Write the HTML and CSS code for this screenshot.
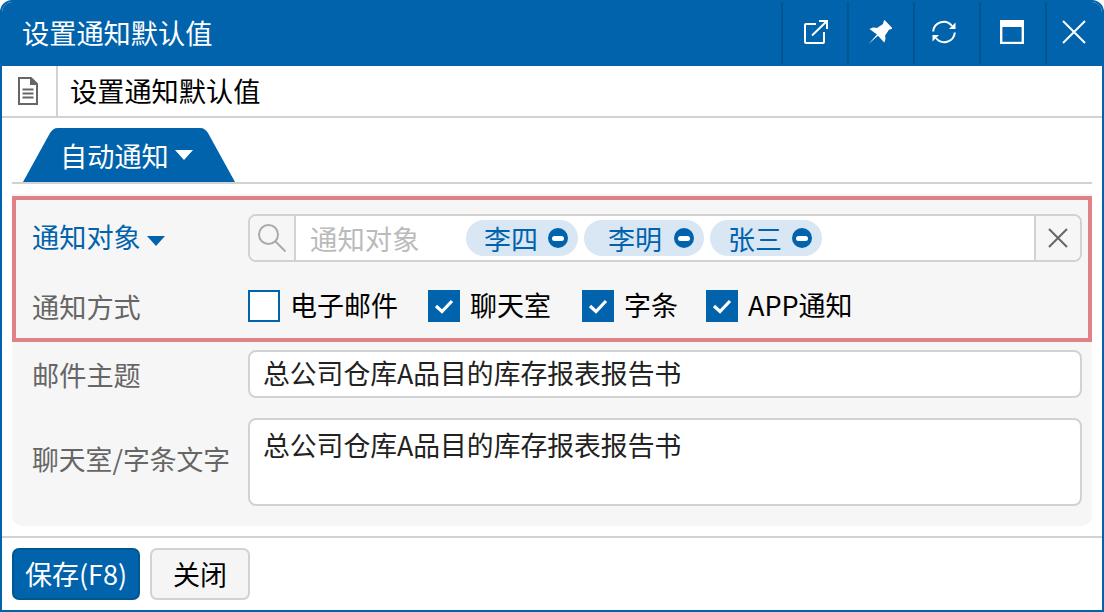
FILE: index.html
```html
<!DOCTYPE html>
<html lang="zh">
<head>
<meta charset="utf-8">
<title>设置通知默认值</title>
<link rel="stylesheet" href="styles.css">
</head>
<body>
<div class="window">
  <header class="titlebar">
    <div class="title">设置通知默认值</div>
    <div class="win-btn btn-ext"><svg width="24" height="24" viewBox="0 0 24 24" fill="none" stroke="#fff" stroke-width="2"><path d="M12 4H2a1 1 0 0 0-1 1v17a1 1 0 0 0 1 1h17a1 1 0 0 0 1-1V12"/><path d="M8 15.500 22.500 1.500"/><path d="M15 1h8v8"/></svg></div>
    <div class="win-btn btn-pin"><svg width="24" height="24" viewBox="0 0 24 24" fill="#fff"><path d="M.5 24 9 14.500 1.500 9c2.500-1.800 5-2 7.500-1l6-4 .8-3.200c.3-.6.800-.6 1.200-.2l7 7.200c.4.500.2 1-.5 1.200l-2.500.8-4 6c.8 2.500.6 4.800-.8 6.800l-6.200-6.800z"/></svg></div>
    <div class="win-btn btn-sync"><svg width="24" height="24" viewBox="0 0 24 24" fill="none" stroke="#fff" stroke-width="2"><path d="M1.200 11.500A10.500 10.500 0 0 1 20 6"/><path d="M22.800 12.500A10.500 10.500 0 0 1 4 18"/><path d="M23.500 2.500V9H17z" fill="#fff" stroke="none"/><path d="M.5 21.500V15H7z" fill="#fff" stroke="none"/></svg></div>
    <div class="win-btn btn-max"><svg width="24" height="24" viewBox="0 0 24 24" fill="none" stroke="#fff"><rect x="1.200" y="1" width="21.600" height="22" stroke-width="2.400"/><path d="M1 4h22" stroke-width="6"/></svg></div>
    <div class="win-btn btn-close"><svg width="24" height="24" viewBox="0 0 24 24" fill="none" stroke="#fff" stroke-width="2"><path d="M1 1l22 22M23 1 1 23"/></svg></div>
  </header>
  <div class="toolbar">
    <div class="doc-cell"><svg width="20" height="28" viewBox="0 0 20 28" fill="none" stroke="#666" stroke-width="2"><path d="M1 1h12l6 6v20H1z"/><path d="M13 1v6h6" fill="#666"/><path d="M4.500 12.500h11M4.500 16.500h11M4.500 20.500h11"/></svg></div>
    <div class="page-title">设置通知默认值</div>
  </div>
  <div class="main">
    <div class="tabs">
      <div class="tab">
        <svg class="tab-bg" width="212" height="54" viewBox="0 0 212 54"><path d="M0 54 27 5c2-3 4-5 8-5h142c4 0 6 2 8 5l27 49z" fill="#0063ac"/></svg>
        <span class="tab-text">自动通知</span><span class="caret caret-white"></span>
      </div>
    </div>
    <div class="panel">
      <div class="highlight">
        <div class="row row-target">
          <div class="label label-link">通知对象<span class="caret caret-blue"></span></div>
          <div class="picker">
            <div class="addon addon-search"><svg width="30" height="30" viewBox="0 0 30 30" fill="none" stroke="#aaa" stroke-width="2"><circle cx="11.500" cy="11.500" r="9.500"/><path d="M18.500 18.500 28.500 28.500"/></svg></div>
            <div class="picker-body">
              <span class="placeholder">通知对象</span>
              <div class="chips">
                <span class="chip chip-a">李四<i class="minus"></i></span>
                <span class="chip chip-b">李明<i class="minus"></i></span>
                <span class="chip chip-c">张三<i class="minus"></i></span>
              </div>
            </div>
            <div class="addon addon-clear"><svg width="20" height="20" viewBox="0 0 20 20" fill="none" stroke="#666" stroke-width="2"><path d="M1 1l18 18M19 1 1 19"/></svg></div>
          </div>
        </div>
        <div class="row row-method">
          <div class="label">通知方式</div>
          <div class="checks">
            <label class="check check-mail"><span class="box"></span><span class="check-text">电子邮件</span></label>
            <label class="check check-chat"><span class="box on"><svg width="20" height="16" viewBox="0 0 20 16" fill="none" stroke="#fff" stroke-width="3.200"><path d="M2 8l6 5.500L18 3"/></svg></span><span class="check-text">聊天室</span></label>
            <label class="check check-note"><span class="box on"><svg width="20" height="16" viewBox="0 0 20 16" fill="none" stroke="#fff" stroke-width="3.200"><path d="M2 8l6 5.500L18 3"/></svg></span><span class="check-text">字条</span></label>
            <label class="check"><span class="box on"><svg width="20" height="16" viewBox="0 0 20 16" fill="none" stroke="#fff" stroke-width="3.200"><path d="M2 8l6 5.500L18 3"/></svg></span><span class="check-text">APP通知</span></label>
          </div>
        </div>
      </div>
      <div class="row row-subject">
        <div class="label">邮件主题</div>
        <div class="field">总公司仓库A品目的库存报表报告书</div>
      </div>
      <div class="row row-text">
        <div class="label">聊天室/字条文字</div>
        <div class="field field-area">总公司仓库A品目的库存报表报告书</div>
      </div>
    </div>
  </div>
  <footer class="footer">
    <button class="btn btn-primary">保存(F8)</button>
    <button class="btn btn-default">关闭</button>
  </footer>
</div>
</body>
</html>
```
FILE: styles.css
```css
* { box-sizing: border-box; }
html, body { margin: 0; padding: 0; background: #fff; }
body { font-family: "Noto Sans CJK SC", "Noto Sans", sans-serif; font-size: 27px; color: #000; }
.window { width: 1104px; height: 612px; border: 2px solid #0063ac; border-radius: 12px 12px 0 0; display: flex; flex-direction: column; overflow: hidden; background: #fff; }
.titlebar { flex: none; background: #0063ac; display: flex; align-items: stretch; color: #fff; margin: -2px -2px 0; height: 66px; }
.title { flex: 1; padding-left: 22px; line-height: 64px; font-size: 27.2px; }
.win-btn { width: 66px; border-left: 2px solid #00568f; margin-bottom: 2px; display: flex; align-items: center; }
.btn-ext { padding-left: 21px; }
.btn-pin { padding-left: 19px; }
.btn-sync { padding-left: 17px; }
.btn-max { padding-left: 19px; }
.btn-close { width: 59px; padding-left: 15px; }
.toolbar { height: 52px; flex: none; display: flex; border-bottom: 2px solid #d2d2d2; }
.doc-cell { width: 56px; border-right: 2px solid #d2d2d2; display: flex; align-items: center; justify-content: center; padding-right: 2px; }
.page-title { padding-left: 12px; line-height: 48px; font-size: 27.2px; }
.main { flex: 1; padding: 0 10px; }
.tabs { height: 66px; padding: 10px 0 0 11px; border-bottom: 2px solid #d2d2d2; }
.tab { position: relative; width: 212px; height: 54px; display: flex; align-items: center; padding-left: 37px; color: #fff; font-size: 27.2px; line-height: 52px; }
.tab-bg { position: absolute; left: 0; top: 0; }
.tab-text { position: relative; }
.caret { display: inline-block; width: 0; height: 0; border-left: 9px solid transparent; border-right: 9px solid transparent; }
.caret-white { position: relative; margin-left: 6px; border-top: 10px solid #fff; }
.caret-blue { margin-left: 6px; border-top: 10px solid #0063ac; vertical-align: 2px; }
.panel { margin-top: 10px; height: 332px; background: #f6f6f6; border-radius: 0 0 10px 10px; padding-top: 2px; }
.highlight { height: 146px; border: 4px solid #e08188; padding: 14px 6px 0 0; }
.row { display: flex; }
.label { width: 232px; flex: none; padding-left: 16px; color: #666; white-space: nowrap; font-size: 27.2px; }
.label-link { color: #0063ac; line-height: 44px; padding-bottom: 4px; }
.row-target { height: 48px; align-items: center; }
.row-method { height: 32px; margin-top: 28px; align-items: center; }
.picker { flex: 1; height: 48px; border: 2px solid #d2d2d2; border-radius: 8px; display: flex; overflow: hidden; background: #fff; }
.addon { flex: none; display: flex; align-items: center; justify-content: center; background: #f6f6f6; }
.addon-search { width: 46px; border-right: 2px solid #d2d2d2; }
.addon-clear { width: 46px; border-left: 2px solid #d2d2d2; }
.picker-body { flex: 1; display: flex; align-items: center; padding-left: 14px; }
.placeholder { width: 156px; flex: none; color: #bbb; font-size: 27.4px; }
.chips { display: flex; gap: 6px; }
.chip { height: 36px; border-radius: 18px; background: #d9e6f3; color: #0063ac; display: flex; align-items: center; justify-content: flex-end; padding-right: 10px; white-space: nowrap; }
.chip-a { width: 112px; }
.chip-b { width: 120px; }
.chip-c { width: 112px; }
.chip-b .minus { margin-left: 12px; }
.minus { width: 20px; height: 20px; border-radius: 50%; background: #0063ac; margin-left: 10px; display: flex; align-items: center; justify-content: center; }
.minus::after { content: ""; width: 12px; height: 5px; border-radius: 2.500px; background: #fff; }
.checks { display: flex; align-items: center; }
.check { display: flex; align-items: center; gap: 10px; white-space: nowrap; }
.check-text { line-height: 32px; margin-top: -3px; }
.check-mail { width: 180px; }
.check-chat { width: 154px; }
.check-note { width: 124px; }
.box { width: 32px; height: 32px; flex: none; border: 2px solid #0063ac; background: #fff; display: flex; align-items: center; justify-content: center; }
.box.on { background: #0063ac; }
.row-subject, .row-text { padding-right: 10px; }
.row-subject { margin-top: 8px; height: 48px; align-items: center; }
.row-text { margin-top: 20px; height: 88px; align-items: center; }
.row-subject .label, .row-text .label { padding-left: 20px; width: 236px; }
.row-text .label { padding-bottom: 8px; font-size: 26.8px; }
.field { flex: 1; height: 48px; border: 2px solid #d2d2d2; border-radius: 8px; background: #fff; padding-left: 13px; line-height: 42px; color: #222; font-size: 26.8px; }
.field-area { height: 88px; padding-top: 4px; }
.footer { height: 74px; flex: none; border-top: 2px solid #d2d2d2; display: flex; gap: 10px; padding: 10px 0 0 10px; }
.btn { height: 52px; border-radius: 7px; font: inherit; padding: 0; line-height: 46px; }
.btn-primary { width: 128px; background: #0063ac; border: 2px solid #00568f; color: #fff; }
.btn-default { width: 100px; background: #f5f5f5; border: 2px solid #d2d2d2; color: #000; }
```
